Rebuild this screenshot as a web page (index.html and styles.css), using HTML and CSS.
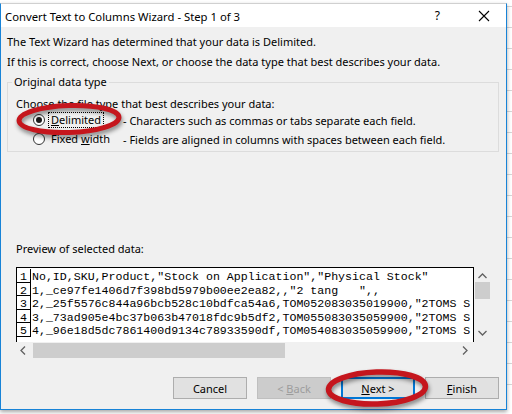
FILE: index.html
```html
<html lang="en">
<head>
<meta charset="utf-8">
<title>Convert Text to Columns Wizard</title>
<link rel="stylesheet" href="styles.css">
</head>
<body>
<div class="screen">
    <div class="window">
        <div class="titlebar">
            <span class="title">Convert Text to Columns Wizard - Step 1 of 3</span>
            <span class="help">?</span>
            <svg class="close" width="12" height="12" viewBox="0 0 12 12">
                <path d="M1 1 L11 11 M11 1 L1 11" stroke="#000" stroke-width="1.1" fill="none"/>
            </svg>
        </div>
        <div class="content">
            <p class="intro">The Text Wizard has determined that your data is Delimited.</p>
            <p class="intro">If this is correct, choose Next, or choose the data type that best describes your data.</p>

            <fieldset class="group">
                <legend>Original data type</legend>
                <div class="prompt">Choose the file type that best describes your data:</div>
                <div class="option">
                    <span class="radio checked"></span>
                    <span class="opt-label"><span class="focus"><u>D</u>elimited</span></span>
                    <span class="opt-desc">- Characters such as commas or tabs separate each field.</span>
                </div>
                <div class="option">
                    <span class="radio"></span>
                    <span class="opt-label"><span class="plain">Fixed <u>w</u>idth</span></span>
                    <span class="opt-desc">- Fields are aligned in columns with spaces between each field.</span>
                </div>
            </fieldset>

            <div class="preview-label">Preview of selected data:</div>
            <div class="preview">
                <div class="preview-main">
                    <div class="data">
                        <div class="row"><span class="num">1</span><span class="line">No,ID,SKU,Product,"Stock on Application","Physical Stock"</span></div>
                        <div class="row"><span class="num">2</span><span class="line">1,_ce97fe1406d7f398bd5979b00ee2ea82,,"2 tang   ",,</span></div>
                        <div class="row"><span class="num">3</span><span class="line">2,_25f5576c844a96bcb528c10bdfca54a6,TOM052083035019900,"2TOMS S</span></div>
                        <div class="row"><span class="num">4</span><span class="line">3,_73ad905e4bc37b063b47018fdc9b5df2,TOM055083035059900,"2TOMS S</span></div>
                        <div class="row"><span class="num">5</span><span class="line">4,_96e18d5dc7861400d9134c78933590df,TOM054083035059900,"2TOMS S</span></div>
                    </div>
                    <div class="vscroll">
                        <svg class="arrow" width="9" height="6" viewBox="0 0 9 6"><path d="M0.5 5 L4.5 1 L8.5 5" stroke="#606060" stroke-width="1.3" fill="none"/></svg>
                        <div class="vthumb"></div>
                        <div class="spacer"></div>
                        <svg class="arrow" width="9" height="6" viewBox="0 0 9 6"><path d="M0.5 1 L4.5 5 L8.5 1" stroke="#606060" stroke-width="1.3" fill="none"/></svg>
                    </div>
                </div>
                <div class="hscroll">
                    <svg class="arrow" width="6" height="9" viewBox="0 0 6 9"><path d="M5 0.5 L1 4.5 L5 8.5" stroke="#606060" stroke-width="1.3" fill="none"/></svg>
                    <div class="hthumb"></div>
                    <div class="spacer"></div>
                    <svg class="arrow" width="6" height="9" viewBox="0 0 6 9"><path d="M1 0.5 L5 4.5 L1 8.5" stroke="#606060" stroke-width="1.3" fill="none"/></svg>
                </div>
            </div>

            <div class="buttons">
                <button class="btn">Cancel</button>
                <button class="btn disabled">&lt; <u>B</u>ack</button>
                <button class="btn default"><u>N</u>ext &gt;</button>
                <button class="btn"><u>F</u>inish</button>
            </div>
        </div>
    </div>

    <!-- hand drawn red rings from the screenshot -->
    <svg class="ring ring-delim" width="112" height="40" viewBox="0 0 112 40">
        <ellipse cx="54" cy="17" rx="50" ry="13.5" transform="rotate(-2 54 17)" fill="none" stroke="#c5161d" stroke-width="5"/>
    </svg>
    <svg class="ring ring-next" width="112" height="46" viewBox="0 0 112 46">
        <ellipse cx="54" cy="20" rx="48.5" ry="16" transform="rotate(-2 54 20)" fill="none" stroke="#c5161d" stroke-width="5.5"/>
    </svg>
</div>
</body>
</html>
```

FILE: styles.css
```css
body{
    margin: 0;
    background: #fff;
    font-family: "Noto Sans", "DejaVu Sans", sans-serif;
    font-size: 11px;
    color: #000;
}
.screen{
    position: relative;
    width: 512px;
    height: 414px;
    overflow: hidden;
    padding-top: 3px;
    box-sizing: border-box;
    /* excel grid peeking out behind the dialog */
    background:
        repeating-linear-gradient(to bottom, transparent 0, transparent 20px, #d6d6d6 20px, #d6d6d6 21px);
    background-position: 0 -14px;
}
.window{
    width: 505px;
    height: 405px;
    border: 1px solid #1883d7;
    border-top-color: #d0d0d0;
    background: #f0f0f0;
    box-shadow: 0 2px 4px rgba(0,0,0,0.35);
    display: flex;
    flex-direction: column;
}
.titlebar{
    height: 23px;
    background: #fff;
    display: flex;
    align-items: center;
    padding-left: 4px;
}
.title{
    flex: 1;
    font-size: 11.3px;
    padding-top: 1px;
}
.help{
    font-size: 12px;
    margin-right: 38px;
}
.close{
    margin-right: 16px;
}
.content{
    padding: 5px 7px 0 6px;
}
.intro{
    margin: 0;
    line-height: 20px;
}
.group{
    margin: 2px 0 0 0;
    padding: 0 8px 4px 8px;
    border: 1px solid #dcdcdc;
}
.group legend{
    padding: 0 2px;
    margin-left: -4px;
    line-height: 16px;
}
.prompt{
    line-height: 16px;
    padding-top: 6px;
}
.option{
    display: flex;
    align-items: center;
    height: 16px;
    padding-left: 17px;
}
.option + .option{
    margin-top: 3px;
}
.radio{
    width: 12px;
    height: 12px;
    border: 1px solid #333;
    border-radius: 50%;
    background: #fff;
    box-sizing: border-box;
    position: relative;
    flex: none;
}
.radio.checked::after{
    content: "";
    position: absolute;
    left: 2px;
    top: 2px;
    width: 6px;
    height: 6px;
    border-radius: 50%;
    background: #1a1a1a;
}
.opt-label{
    width: 75px;
    margin-left: 3px;
    flex: none;
}
.focus, .plain{
    display: inline-block;
    padding: 0 2px;
    line-height: 14px;
    border: 1px dotted transparent;
}
.focus{
    border-color: #000;
}
.preview-label{
    line-height: 16px;
    margin-top: 89px;
    padding-left: 9px;
}
.preview{
    margin: 10px 0 0 9px;
    width: 475px;
}
.preview-main{
    display: flex;
    height: 75px;
}
.data{
    width: 456px;
    border: 1px solid #000;
    border-bottom: none;
    background: #fff;
    overflow: hidden;
    font-family: "Liberation Mono", "DejaVu Sans Mono", monospace;
    font-size: 11.6px;
    padding-top: 1px;
}
.row{
    display: flex;
    height: 13.5px;
    line-height: 15px;
    white-space: pre;
}
.num{
    width: 13px;
    flex: none;
    border-right: 1px solid #000;
    border-bottom: 1px solid #000;
    box-sizing: content-box;
    text-align: center;
    height: 12.5px;
    overflow: hidden;
}
.line{
    padding-left: 1px;
}
.vscroll{
    width: 17px;
    display: flex;
    flex-direction: column;
    align-items: center;
    padding-top: 6px;
    padding-bottom: 6px;
    box-sizing: border-box;
}
.vthumb{
    width: 15px;
    height: 17px;
    background: #cdcdcd;
    margin-top: 3px;
}
.spacer{
    flex: 1;
}
.hscroll{
    width: 458px;
    height: 17px;
    display: flex;
    align-items: center;
    padding: 0 6px 0 4px;
    box-sizing: border-box;
}
.hthumb{
    width: 252px;
    height: 15px;
    background: #cdcdcd;
    margin-left: 7px;
}
.buttons{
    display: flex;
    justify-content: flex-end;
    gap: 10px;
    margin-top: 18px;
}
.btn{
    width: 74px;
    height: 22px;
    background: #e1e1e1;
    border: 1px solid #adadad;
    font-family: "Noto Sans", "DejaVu Sans", sans-serif;
    font-size: 11px;
    color: #000;
    padding: 0;
}
.btn.disabled{
    background: #cccccc;
    border-color: #bfbfbf;
    color: #9c9c9c;
}
.btn.default{
    border-color: #0078d7;
    box-shadow: inset 0 0 0 1px #0078d7;
}
.ring{
    position: absolute;
    filter: drop-shadow(1px 3px 2px rgba(0,0,0,0.45));
}
.ring-delim{
    left: 15px;
    top: 102px;
}
.ring-next{
    left: 323px;
    top: 368px;
}
```
